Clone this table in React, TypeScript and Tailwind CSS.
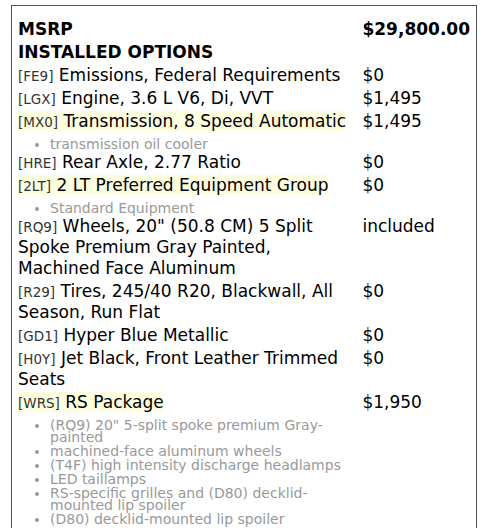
import type { FC, ReactNode } from "react";

type Row = {
  code?: string;
  name: string;
  price: string;
  hl?: boolean;
  notes?: string[];
};

const rows: Row[] = [
  { code: "FE9", name: "Emissions, Federal Requirements", price: "$0" },
  { code: "LGX", name: "Engine, 3.6 L V6, Di, VVT", price: "$1,495" },
  {
    code: "MX0",
    name: "Transmission, 8 Speed Automatic",
    price: "$1,495",
    hl: true,
    notes: ["transmission oil cooler"],
  },
  { code: "HRE", name: "Rear Axle, 2.77 Ratio", price: "$0" },
  {
    code: "2LT",
    name: "2 LT Preferred Equipment Group",
    price: "$0",
    hl: true,
    notes: ["Standard Equipment"],
  },
  {
    code: "RQ9",
    name: 'Wheels, 20" (50.8 CM) 5 Split Spoke Premium Gray Painted, Machined Face Aluminum',
    price: "included",
  },
  { code: "R29", name: "Tires, 245/40 R20, Blackwall, All Season, Run Flat", price: "$0" },
  { code: "GD1", name: "Hyper Blue Metallic", price: "$0" },
  { code: "H0Y", name: "Jet Black, Front Leather Trimmed Seats", price: "$0" },
  {
    code: "WRS",
    name: "RS Package",
    price: "$1,950",
    hl: true,
    notes: [
      '(RQ9) 20" 5-split spoke premium Gray-painted',
      "machined-face aluminum wheels",
      "(T4F) high intensity discharge headlamps",
      "LED taillamps",
      "RS-specific grilles and (D80) decklid-mounted lip spoiler",
      "(D80) decklid-mounted lip spoiler",
    ],
  },
];

const Label: FC<{ row: Row }> = ({ row }) => {
  const inner: ReactNode = (
    <>
      <span className="text-[13.5px] leading-none text-[#333]">[{row.code}]</span> {row.name}
    </>
  );
  return row.hl ? <span className="bg-[#fdfde0]">{inner}</span> : <span>{inner}</span>;
};

const App: FC = () => {
  return (
    <div className="min-h-screen bg-white pt-[5px] pl-[11px] pr-[8px] font-['DejaVu_Sans',sans-serif] text-[17px] leading-[21px] text-black">
      <div className="border border-[#555] px-[6px] pt-[12px] pb-4">
        <table className="border-collapse">
          <tbody>
            <tr>
              <td className="w-[348px] py-px align-top font-bold">MSRP</td>
              <td className="py-px align-top font-bold">$29,800.00</td>
            </tr>
            <tr>
              <td className="py-px align-top font-bold" colSpan={2}>
                INSTALLED OPTIONS
              </td>
            </tr>
            {rows.map((row) => (
              <tr key={row.code}>
                <td className="w-[348px] py-px pr-2 align-top">
                  <Label row={row} />
                  {row.notes && (
                    <ul className="list-disc pl-[32px] pt-[6px] text-[14px] leading-[12px] text-[#999]">
                      {row.notes.map((n, i) => (
                        <li key={n} className={i > 0 ? "mt-[2px]" : ""}>
                          {n}
                        </li>
                      ))}
                    </ul>
                  )}
                </td>
                <td className="py-px align-top">{row.price}</td>
              </tr>
            ))}
          </tbody>
        </table>
      </div>
    </div>
  );
};

export default App;
